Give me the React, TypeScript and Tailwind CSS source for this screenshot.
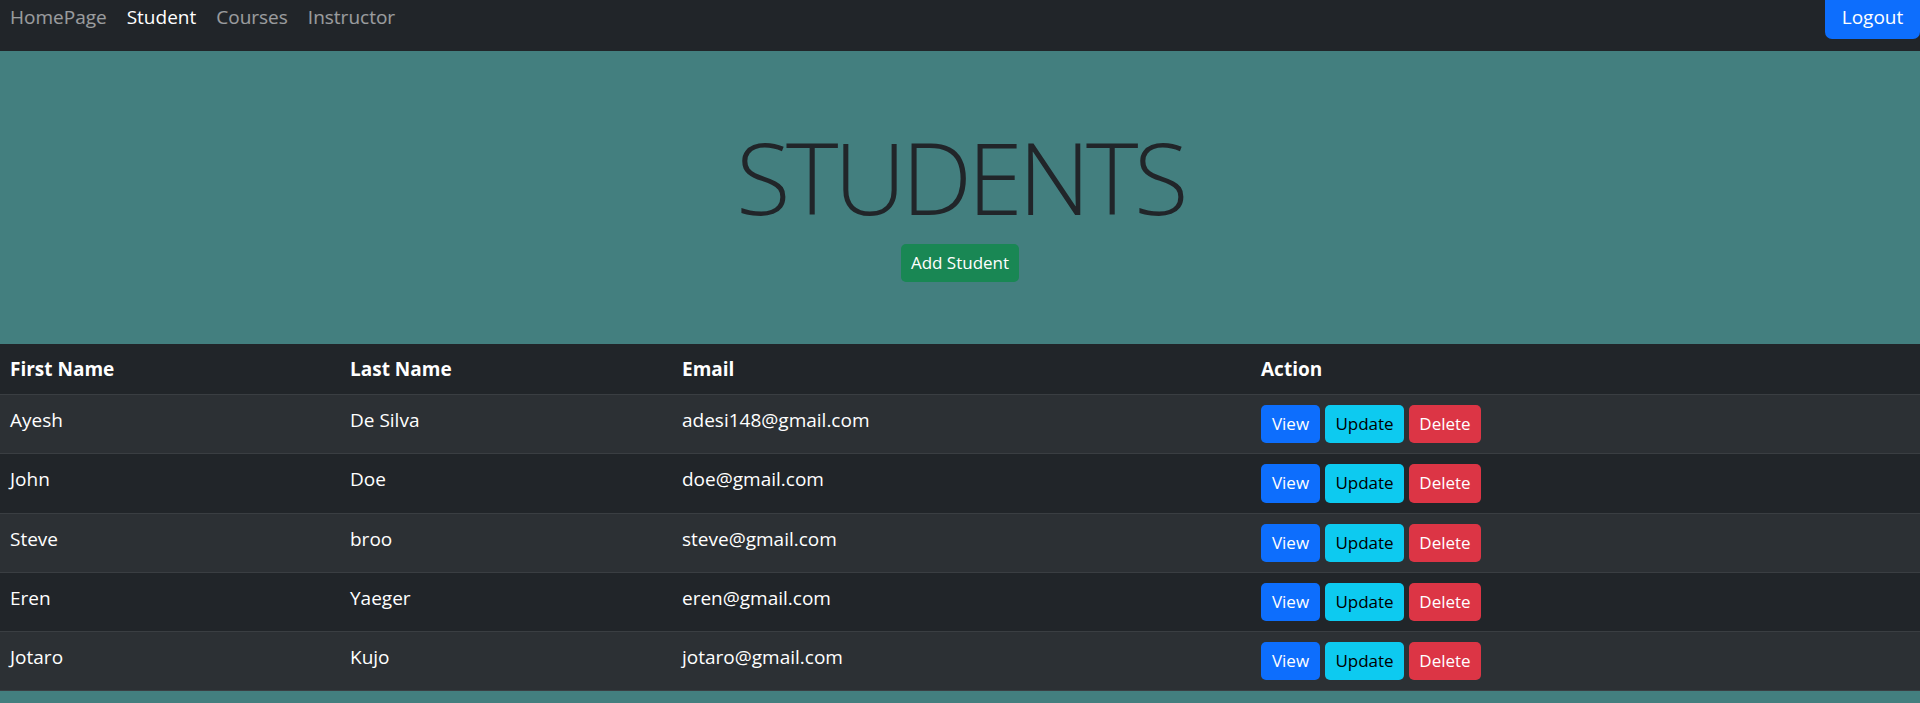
import React from "react";

type Student = {
  firstName: string;
  lastName: string;
  email: string;
};

const students: Student[] = [
  { firstName: "Ayesh", lastName: "De Silva", email: "adesi148@gmail.com" },
  { firstName: "John", lastName: "Doe", email: "doe@gmail.com" },
  { firstName: "Steve", lastName: "broo", email: "steve@gmail.com" },
  { firstName: "Eren", lastName: "Yaeger", email: "eren@gmail.com" },
  { firstName: "Jotaro", lastName: "Kujo", email: "jotaro@gmail.com" },
];

const links = [
  { label: "HomePage", active: false },
  { label: "Student", active: true },
  { label: "Courses", active: false },
  { label: "Instructor", active: false },
];

export default function App() {
  return (
    <div className="min-h-screen w-full bg-[#437f7f] font-['Open_Sans',sans-serif] text-[19px]">
      {/* 상단 네비게이션 */}
      <nav className="h-[51px] bg-[#212529] flex justify-between items-start">
        <ul className="flex mt-[2px]">
          {links.map((link) => (
            <li key={link.label}>
              <a
                href="#"
                className={
                  link.active
                    ? "block px-[10px] leading-[30px] text-white"
                    : "block px-[10px] leading-[30px] text-white/55"
                }
              >
                {link.label}
              </a>
            </li>
          ))}
        </ul>
        <button className="h-[39px] w-[95px] bg-[#0d6efd] text-white rounded-b-[7px] flex items-end justify-center pb-[7px] leading-[30px]">
          Logout
        </button>
      </nav>

      {/* 헤더 영역 */}
      <div className="h-[293px] flex flex-col items-center pt-[65px]">
        <h1 className="text-[100px] leading-[120px] font-light text-[#212529] tracking-[-4.5px]">
          STUDENTS
        </h1>
        <button className="mt-[8px] h-[38px] w-[118px] bg-[#198754] text-white text-[17px] rounded-[5px]">
          Add Student
        </button>
      </div>

      {/* 학생 테이블 */}
      <table className="w-full border-collapse text-white">
        <thead>
          <tr className="bg-[#212529] border-b border-[#3a3e42]">
            <th className="w-[340px] text-left align-top px-[10px] py-[10px] leading-[30px] font-bold">First Name</th>
            <th className="w-[332px] text-left align-top px-[10px] py-[10px] leading-[30px] font-bold">Last Name</th>
            <th className="w-[579px] text-left align-top px-[10px] py-[10px] leading-[30px] font-bold">Email</th>
            <th className="text-left align-top px-[10px] py-[10px] leading-[30px] font-bold">Action</th>
          </tr>
        </thead>
        <tbody>
          {students.map((s, index) => (
            <tr
              key={s.email}
              className={
                index % 2 === 0
                  ? "bg-[#2c3034] border-b border-[#3a3e42]"
                  : "bg-[#212529] border-b border-[#3a3e42]"
              }
            >
              <td className="align-top px-[10px] py-[10px] leading-[30px]">{s.firstName}</td>
              <td className="align-top px-[10px] py-[10px] leading-[30px]">{s.lastName}</td>
              <td className="align-top px-[10px] py-[10px] leading-[30px]">{s.email}</td>
              <td className="align-top px-[10px] py-[10px]">
                <div className="flex gap-[5px] text-[17px] leading-[26px]">
                  <button className="h-[38.3px] w-[59px] bg-[#0d6efd] text-white rounded-[5px]">View</button>
                  <button className="h-[38.3px] w-[79px] bg-[#0dcaf0] text-black rounded-[5px]">Update</button>
                  <button className="h-[38.3px] w-[72px] bg-[#dc3545] text-white rounded-[5px]">Delete</button>
                </div>
              </td>
            </tr>
          ))}
        </tbody>
      </table>
    </div>
  );
}
